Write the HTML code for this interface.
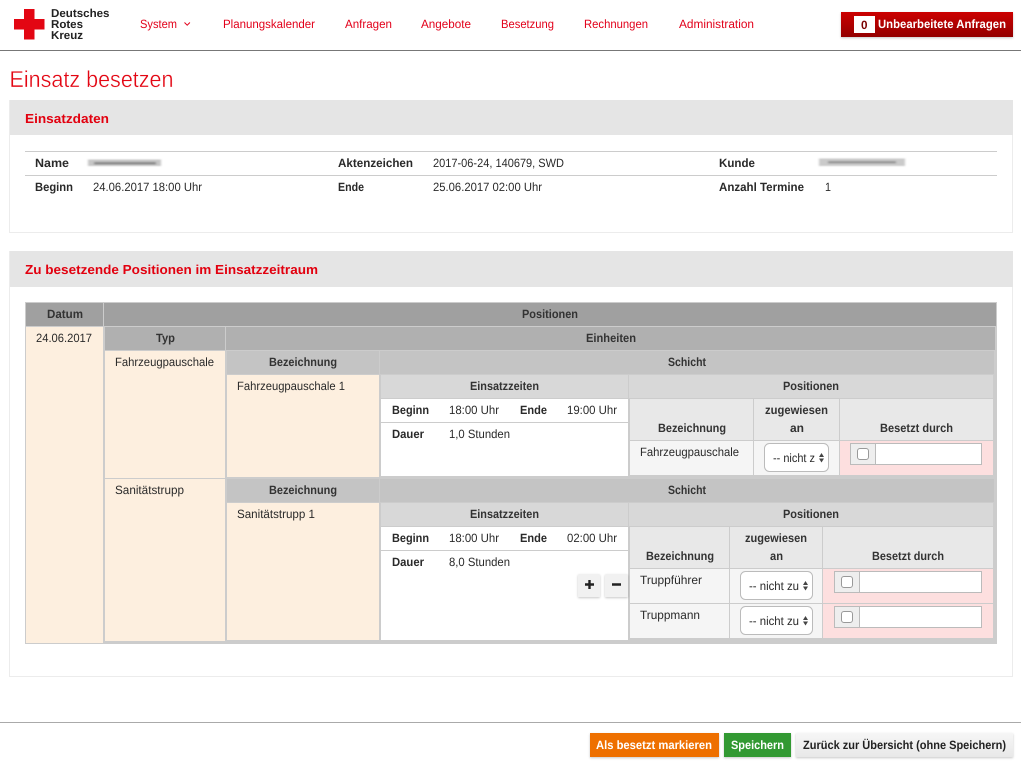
<!DOCTYPE html>
<html lang="de"><head><meta charset="utf-8"><title>Einsatz besetzen</title>
<style>
html,body{margin:0;padding:0;background:#fff;width:1021px;height:766px;overflow:hidden}
svg{display:block}
text{font-family:"Liberation Sans",sans-serif;font-size:12px;fill:#2a2a2a;text-rendering:geometricPrecision}
.b{font-weight:bold}
.h{font-weight:bold;fill:#333}
.n{fill:#e2001a}
.r{font-weight:bold;fill:#e2000f;font-size:13px}
.w{font-weight:bold;fill:#fff}
.t{font-size:23px;fill:#e30613;stroke:#fff;stroke-width:.35px}
</style></head><body>
<svg width="1021" height="766" viewBox="0 0 1021 766" xmlns="http://www.w3.org/2000/svg">
<defs>
<linearGradient id="rg" x1="0" y1="0" x2="0" y2="1"><stop offset="0" stop-color="#cc0000"/><stop offset="1" stop-color="#930000"/></linearGradient>
<linearGradient id="gg" x1="0" y1="0" x2="0" y2="1"><stop offset="0" stop-color="#f6f6f6"/><stop offset="1" stop-color="#e8e8e8"/></linearGradient>
<filter id="bl" x="-10%" y="-80%" width="120%" height="260%"><feGaussianBlur stdDeviation="1 .8"/></filter>
<filter id="sh" x="-10%" y="-20%" width="120%" height="150%"><feDropShadow dx="0" dy="1" stdDeviation="1" flood-color="#000" flood-opacity=".22"/></filter>
<clipPath id="c1"><rect x="770" y="445" width="45" height="25"/></clipPath>
</defs>

<!-- header -->
<rect x="0" y="50" width="1021" height="1" fill="#777"/>
<path d="M24 9h10.500v10h10v10.500h-10v10h-10.500v-10h-10v-10.500h10z" fill="#e30613"/>
<text class="b" x="51" y="17" textLength="58.500" lengthAdjust="spacingAndGlyphs" style="font-size:11.500px;fill:#222">Deutsches</text>
<text class="b" x="51" y="28" textLength="32" lengthAdjust="spacingAndGlyphs" style="font-size:11.500px;fill:#222">Rotes</text>
<text class="b" x="51" y="39" textLength="32" lengthAdjust="spacingAndGlyphs" style="font-size:11.500px;fill:#222">Kreuz</text>
<text class="n" x="140" y="28" textLength="37" lengthAdjust="spacingAndGlyphs">System</text>
<path d="M184.500 22.500l2.700 2.700 2.700-2.700" fill="none" stroke="#e2001a" stroke-width="1"/>
<text class="n" x="223" y="28" textLength="92" lengthAdjust="spacingAndGlyphs">Planungskalender</text>
<text class="n" x="345" y="28" textLength="47" lengthAdjust="spacingAndGlyphs">Anfragen</text>
<text class="n" x="421" y="28" textLength="50" lengthAdjust="spacingAndGlyphs">Angebote</text>
<text class="n" x="501" y="28" textLength="53" lengthAdjust="spacingAndGlyphs">Besetzung</text>
<text class="n" x="584" y="28" textLength="64" lengthAdjust="spacingAndGlyphs">Rechnungen</text>
<text class="n" x="679" y="28" textLength="75" lengthAdjust="spacingAndGlyphs">Administration</text>
<rect x="841" y="12" width="172" height="25" fill="url(#rg)" filter="url(#sh)"/>
<rect x="854" y="16" width="21" height="17" fill="#fff"/>
<text class="b" x="861" y="29" textLength="6.500" lengthAdjust="spacingAndGlyphs" style="fill:#7a0000">0</text>
<text class="w" x="878" y="28" textLength="128" lengthAdjust="spacingAndGlyphs">Unbearbeitete Anfragen</text>

<text class="t" x="9.500" y="87" textLength="164" lengthAdjust="spacingAndGlyphs">Einsatz besetzen</text>

<!-- panel 1 -->
<rect x="9.500" y="100.500" width="1003" height="132" fill="#fff" stroke="#ececec"/>
<rect x="10" y="100" width="1003" height="35" fill="#e5e5e5"/>
<text class="r" x="25" y="123" textLength="84" lengthAdjust="spacingAndGlyphs">Einsatzdaten</text>
<rect x="25" y="151" width="972" height="1" fill="#ccc"/>
<rect x="25" y="175" width="972" height="1" fill="#ccc"/>
<text class="b" x="35" y="167" textLength="34" lengthAdjust="spacingAndGlyphs">Name</text>
<text class="b" x="35" y="191" textLength="38" lengthAdjust="spacingAndGlyphs">Beginn</text>
<text x="93" y="191" textLength="109" lengthAdjust="spacingAndGlyphs">24.06.2017 18:00 Uhr</text>
<text class="b" x="338" y="167" textLength="75" lengthAdjust="spacingAndGlyphs">Aktenzeichen</text>
<text x="433" y="167" textLength="131" lengthAdjust="spacingAndGlyphs">2017-06-24, 140679, SWD</text>
<text class="b" x="338" y="191" textLength="26" lengthAdjust="spacingAndGlyphs">Ende</text>
<text x="433" y="191" textLength="109" lengthAdjust="spacingAndGlyphs">25.06.2017 02:00 Uhr</text>
<text class="b" x="719" y="167" textLength="36" lengthAdjust="spacingAndGlyphs">Kunde</text>
<text class="b" x="719" y="191" textLength="85" lengthAdjust="spacingAndGlyphs">Anzahl Termine</text>
<text x="825" y="191" textLength="6" lengthAdjust="spacingAndGlyphs">1</text>
<g filter="url(#bl)">
<rect x="88" y="159.500" width="73" height="6.500" fill="#c6c6c6"/>
<rect x="94" y="162" width="62" height="2.500" fill="#8a8a8a"/>
<rect x="819" y="158.500" width="86" height="7.500" fill="#cacaca"/>
<rect x="828" y="161" width="68" height="2.500" fill="#999"/>
</g>

<!-- panel 2 -->
<rect x="9.500" y="251.500" width="1003" height="425" fill="#fff" stroke="#ececec"/>
<rect x="10" y="251" width="1003" height="36" fill="#e5e5e5"/>
<text class="r" x="25" y="274" textLength="293" lengthAdjust="spacingAndGlyphs">Zu besetzende Positionen im Einsatzzeitraum</text>

<!-- table frame -->
<rect x="25" y="302" width="972" height="342" fill="#ccc"/>
<rect x="26" y="303" width="77" height="23" fill="#a0a0a0"/>
<rect x="104" y="303" width="892" height="23" fill="#a0a0a0"/>
<rect x="26" y="327" width="77" height="316" fill="#fdefdf"/>
<text class="h" x="47" y="318" textLength="36" lengthAdjust="spacingAndGlyphs">Datum</text>
<text class="h" x="522" y="318" textLength="56" lengthAdjust="spacingAndGlyphs">Positionen</text>
<text x="36" y="342" textLength="56" lengthAdjust="spacingAndGlyphs">24.06.2017</text>

<!-- level 2 -->
<rect x="105" y="327" width="120" height="23" fill="#b0b0b0"/>
<rect x="226" y="327" width="769" height="23" fill="#b0b0b0"/>
<text class="h" x="156" y="342" textLength="19" lengthAdjust="spacingAndGlyphs">Typ</text>
<text class="h" x="586" y="342" textLength="50" lengthAdjust="spacingAndGlyphs">Einheiten</text>
<rect x="105" y="351" width="120" height="127" fill="#fdefdf"/>
<rect x="105" y="479" width="120" height="162" fill="#fdefdf"/>
<text x="115" y="366" textLength="99" lengthAdjust="spacingAndGlyphs">Fahrzeugpauschale</text>
<text x="115" y="494" textLength="69" lengthAdjust="spacingAndGlyphs">Sanitätstrupp</text>

<!-- level 3, row 1 -->
<rect x="227" y="351" width="152" height="23" fill="#c4c4c4"/>
<rect x="380" y="351" width="614" height="23" fill="#c4c4c4"/>
<text class="h" x="269" y="366" textLength="68" lengthAdjust="spacingAndGlyphs">Bezeichnung</text>
<text class="h" x="668" y="366" textLength="38" lengthAdjust="spacingAndGlyphs">Schicht</text>
<rect x="227" y="375" width="152" height="102" fill="#fdefdf"/>
<text x="237" y="390" textLength="108" lengthAdjust="spacingAndGlyphs">Fahrzeugpauschale 1</text>
<!-- level 4, row 1 -->
<rect x="381" y="375" width="247" height="23" fill="#d8d8d8"/>
<rect x="629" y="375" width="364" height="23" fill="#d8d8d8"/>
<text class="h" x="470" y="390" textLength="69" lengthAdjust="spacingAndGlyphs">Einsatzzeiten</text>
<text class="h" x="783" y="390" textLength="56" lengthAdjust="spacingAndGlyphs">Positionen</text>
<rect x="381" y="399" width="247" height="77" fill="#fff"/>
<rect x="381" y="422" width="247" height="1" fill="#ccc"/>
<text class="b" x="392" y="414" textLength="37" lengthAdjust="spacingAndGlyphs">Beginn</text>
<text x="449" y="414" textLength="50" lengthAdjust="spacingAndGlyphs">18:00 Uhr</text>
<text class="b" x="520" y="414" textLength="27" lengthAdjust="spacingAndGlyphs">Ende</text>
<text x="567" y="414" textLength="50" lengthAdjust="spacingAndGlyphs">19:00 Uhr</text>
<text class="b" x="392" y="438" textLength="32" lengthAdjust="spacingAndGlyphs">Dauer</text>
<text x="449" y="438" textLength="61" lengthAdjust="spacingAndGlyphs">1,0 Stunden</text>
<!-- level 5, row 1 -->
<rect x="630" y="399" width="123" height="41" fill="#e8e8e8"/>
<rect x="754" y="399" width="85" height="41" fill="#e8e8e8"/>
<rect x="840" y="399" width="153" height="41" fill="#e8e8e8"/>
<text class="h" x="658" y="432" textLength="68" lengthAdjust="spacingAndGlyphs">Bezeichnung</text>
<text class="h" x="765" y="414" textLength="63" lengthAdjust="spacingAndGlyphs">zugewiesen</text>
<text class="h" x="790" y="432" textLength="14" lengthAdjust="spacingAndGlyphs">an</text>
<text class="h" x="880" y="432" textLength="73" lengthAdjust="spacingAndGlyphs">Besetzt durch</text>
<rect x="630" y="441" width="123" height="34" fill="#f5f5f5"/>
<rect x="754" y="441" width="85" height="34" fill="#f5f5f5"/>
<rect x="840" y="441" width="153" height="34" fill="#fddfdf"/>
<text x="640" y="456" textLength="99" lengthAdjust="spacingAndGlyphs">Fahrzeugpauschale</text>
<rect x="764.500" y="443.500" width="64" height="28" rx="5" fill="#fff" stroke="#bbb"/>
<text x="773" y="462" clip-path="url(#c1)" textLength="42" lengthAdjust="spacingAndGlyphs">-- nicht z</text>
<path d="M819 457l2.500-4 2.500 4zM819 458.500l2.500 4 2.500-4z" fill="#444"/>
<rect x="850.500" y="443.500" width="131" height="21" fill="#fff" stroke="#bbb"/>
<rect x="851" y="444" width="24" height="20" fill="#eee"/><rect x="875" y="444" width="1" height="20" fill="#bbb"/>
<rect x="857.500" y="448.500" width="11" height="11" rx="2.500" fill="#fff" stroke="#999"/>

<!-- level 3, row 2 -->
<rect x="227" y="479" width="152" height="23" fill="#c4c4c4"/>
<rect x="380" y="479" width="614" height="23" fill="#c4c4c4"/>
<text class="h" x="269" y="494" textLength="68" lengthAdjust="spacingAndGlyphs">Bezeichnung</text>
<text class="h" x="668" y="494" textLength="38" lengthAdjust="spacingAndGlyphs">Schicht</text>
<rect x="227" y="503" width="152" height="137" fill="#fdefdf"/>
<text x="237" y="518" textLength="78" lengthAdjust="spacingAndGlyphs">Sanitätstrupp 1</text>
<!-- level 4, row 2 -->
<rect x="381" y="503" width="247" height="23" fill="#d8d8d8"/>
<rect x="629" y="503" width="364" height="23" fill="#d8d8d8"/>
<text class="h" x="470" y="518" textLength="69" lengthAdjust="spacingAndGlyphs">Einsatzzeiten</text>
<text class="h" x="783" y="518" textLength="56" lengthAdjust="spacingAndGlyphs">Positionen</text>
<rect x="381" y="527" width="247" height="113" fill="#fff"/>
<rect x="381" y="550" width="247" height="1" fill="#ccc"/>
<text class="b" x="392" y="542" textLength="37" lengthAdjust="spacingAndGlyphs">Beginn</text>
<text x="449" y="542" textLength="50" lengthAdjust="spacingAndGlyphs">18:00 Uhr</text>
<text class="b" x="520" y="542" textLength="27" lengthAdjust="spacingAndGlyphs">Ende</text>
<text x="567" y="542" textLength="50" lengthAdjust="spacingAndGlyphs">02:00 Uhr</text>
<text class="b" x="392" y="566" textLength="32" lengthAdjust="spacingAndGlyphs">Dauer</text>
<text x="449" y="566" textLength="61" lengthAdjust="spacingAndGlyphs">8,0 Stunden</text>
<rect x="578" y="574" width="22" height="23" rx="1" fill="#f1f1f1" filter="url(#sh)"/>
<rect x="605" y="574" width="23" height="23" rx="1" fill="#f1f1f1" filter="url(#sh)"/>
<path d="M585 584.500h9M589.500 580v9M612 584.500h9" stroke="#222" stroke-width="2.400" fill="none"/>
<!-- level 5, row 2 -->
<rect x="630" y="527" width="99" height="41" fill="#e8e8e8"/>
<rect x="730" y="527" width="92" height="41" fill="#e8e8e8"/>
<rect x="823" y="527" width="170" height="41" fill="#e8e8e8"/>
<text class="h" x="646" y="560" textLength="68" lengthAdjust="spacingAndGlyphs">Bezeichnung</text>
<text class="h" x="745" y="542" textLength="62" lengthAdjust="spacingAndGlyphs">zugewiesen</text>
<text class="h" x="770" y="560" textLength="13" lengthAdjust="spacingAndGlyphs">an</text>
<text class="h" x="872" y="560" textLength="72" lengthAdjust="spacingAndGlyphs">Besetzt durch</text>

<rect x="630" y="569" width="99" height="34" fill="#f5f5f5"/>
<rect x="730" y="569" width="92" height="34" fill="#f5f5f5"/>
<rect x="823" y="569" width="170" height="34" fill="#fddfdf"/>
<rect x="630" y="604" width="99" height="34" fill="#f5f5f5"/>
<rect x="730" y="604" width="92" height="34" fill="#f5f5f5"/>
<rect x="823" y="604" width="170" height="34" fill="#fddfdf"/>
<text x="640" y="584" textLength="62" lengthAdjust="spacingAndGlyphs">Truppführer</text>
<text x="640" y="619" textLength="60" lengthAdjust="spacingAndGlyphs">Truppmann</text>

<rect x="740.500" y="571.500" width="72" height="28" rx="5" fill="#fff" stroke="#bbb"/>
<text x="749" y="590" textLength="50" lengthAdjust="spacingAndGlyphs">-- nicht zu</text>
<path d="M803 585l2.500-4 2.500 4zM803 586.500l2.500 4 2.500-4z" fill="#444"/>
<rect x="740.500" y="606.500" width="72" height="28" rx="5" fill="#fff" stroke="#bbb"/>
<text x="749" y="625" textLength="50" lengthAdjust="spacingAndGlyphs">-- nicht zu</text>
<path d="M803 620l2.500-4 2.500 4zM803 621.500l2.500 4 2.500-4z" fill="#444"/>

<rect x="834.500" y="571.500" width="147" height="21" fill="#fff" stroke="#bbb"/>
<rect x="835" y="572" width="24" height="20" fill="#eee"/><rect x="859" y="572" width="1" height="20" fill="#bbb"/>
<rect x="841.500" y="576.500" width="11" height="11" rx="2.500" fill="#fff" stroke="#999"/>
<rect x="834.500" y="606.500" width="147" height="21" fill="#fff" stroke="#bbb"/>
<rect x="835" y="607" width="24" height="20" fill="#eee"/><rect x="859" y="607" width="1" height="20" fill="#bbb"/>
<rect x="841.500" y="611.500" width="11" height="11" rx="2.500" fill="#fff" stroke="#999"/>

<!-- footer -->
<rect x="0" y="722" width="1021" height="1" fill="#aaa"/>
<rect x="590" y="733" width="129" height="24" fill="#ee7000" filter="url(#sh)"/>
<rect x="724" y="733" width="67" height="24" fill="#339933" filter="url(#sh)"/>
<rect x="796" y="733" width="217" height="24" fill="url(#gg)" filter="url(#sh)"/>
<text class="w" x="596" y="749" textLength="116" lengthAdjust="spacingAndGlyphs">Als besetzt markieren</text>
<text class="w" x="731" y="749" textLength="53" lengthAdjust="spacingAndGlyphs">Speichern</text>
<text x="803" y="749" textLength="203" lengthAdjust="spacingAndGlyphs" style="fill:#222;font-weight:bold">Zurück zur Übersicht (ohne Speichern)</text>
</svg>
</body></html>
